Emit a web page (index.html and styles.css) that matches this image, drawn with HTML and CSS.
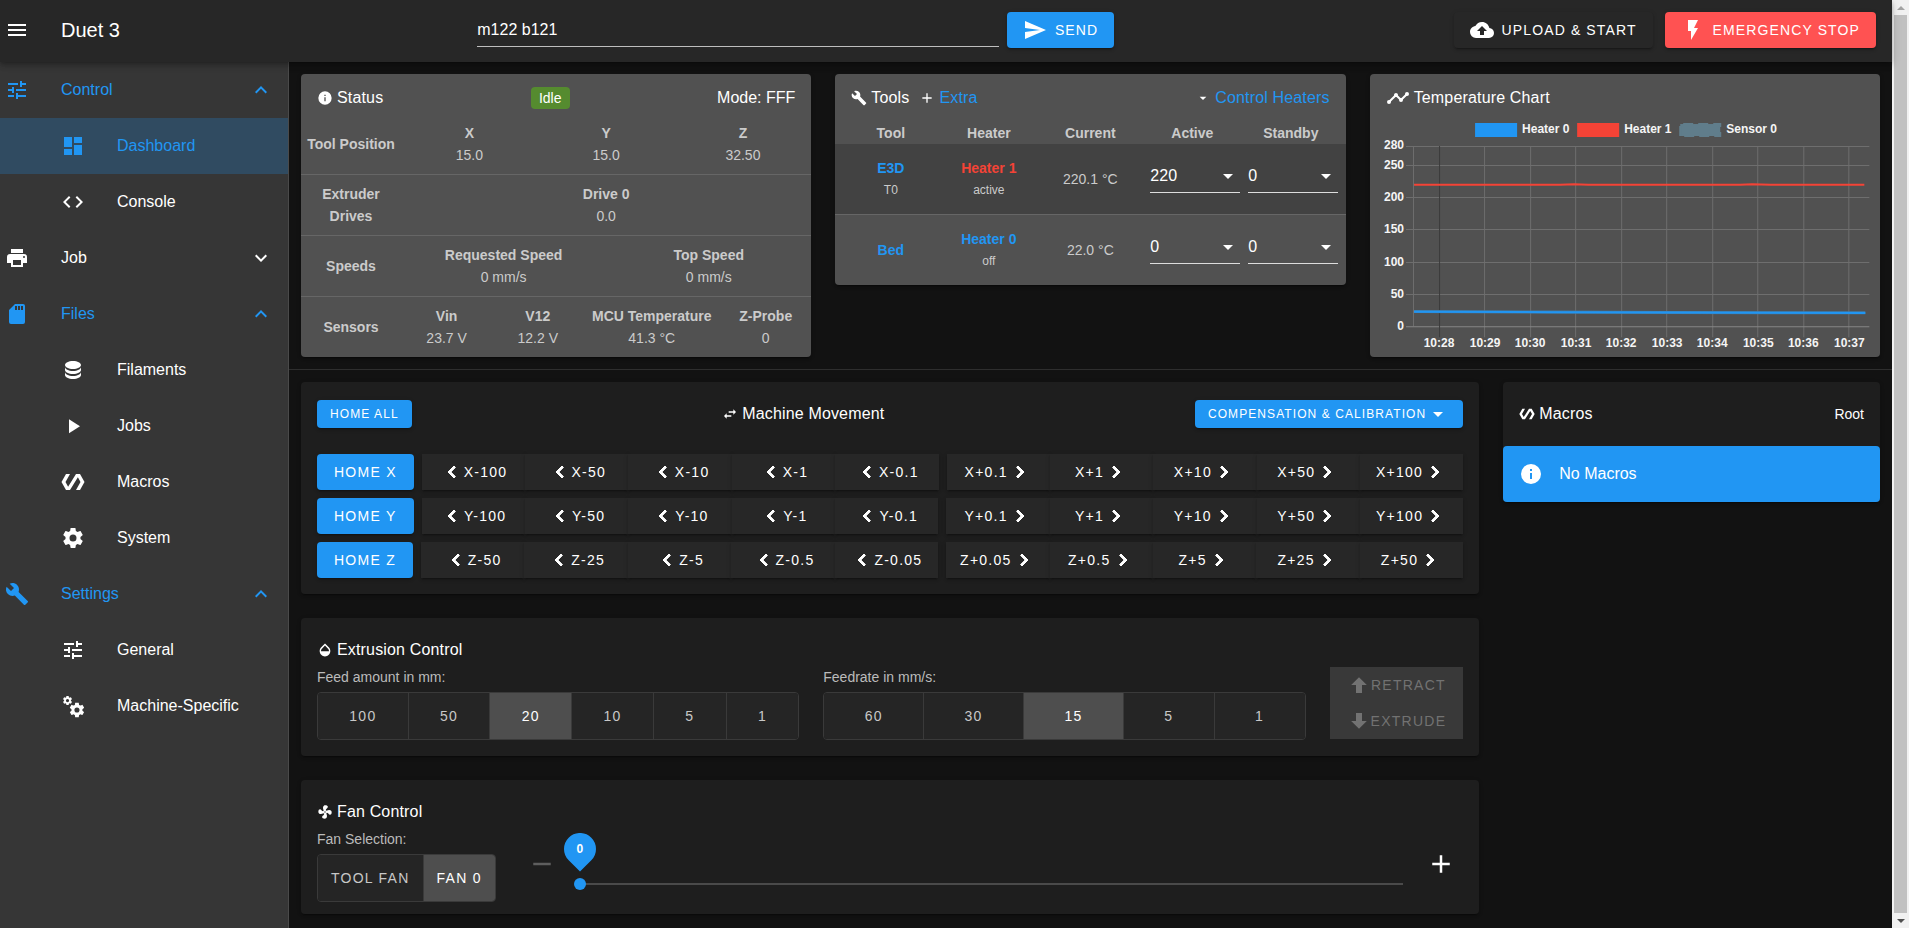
FILE: index.html
```html
<!DOCTYPE html>
<html lang="en">
<head>
<meta charset="utf-8">
<title>Duet 3</title>
<link rel="stylesheet" href="styles.css">
</head>
<body>
<svg class="sprite" aria-hidden="true">
  <symbol id="i-menu" viewBox="0 0 24 24"><path d="M3,6H21V8H3V6M3,11H21V13H3V11M3,16H21V18H3V16Z"/></symbol>
  <symbol id="i-tune" viewBox="0 0 24 24"><path d="M3,17V19H9V17H3M3,5V7H13V5H3M13,21V19H21V17H13V15H11V21H13M7,9V11H3V13H7V15H9V9H7M21,13V11H11V13H21M15,9H17V7H21V5H17V3H15V9Z"/></symbol>
  <symbol id="i-dashboard" viewBox="0 0 24 24"><path d="M13,3V9H21V3M13,21H21V11H13M3,21H11V15H3M3,13H11V3H3V13Z"/></symbol>
  <symbol id="i-code" viewBox="0 0 24 24"><path d="M14.6,16.6L19.2,12L14.6,7.4L16,6L22,12L16,18L14.6,16.6M9.4,16.6L4.8,12L9.4,7.4L8,6L2,12L8,18L9.4,16.6Z"/></symbol>
  <symbol id="i-printer" viewBox="0 0 24 24"><path d="M18,3H6V7H18M19,12A1,1 0 0,1 18,11A1,1 0 0,1 19,10A1,1 0 0,1 20,11A1,1 0 0,1 19,12M16,19H8V14H16M19,8H5A3,3 0 0,0 2,11V17H6V21H18V17H22V11A3,3 0 0,0 19,8Z"/></symbol>
  <symbol id="i-sd" viewBox="0 0 24 24"><path d="M18,8H16V4H18M15,8H13V4H15M12,8H10V4H12M18,2H10L4,8V20A2,2 0 0,0 6,22H18A2,2 0 0,0 20,20V4A2,2 0 0,0 18,2Z"/></symbol>
  <symbol id="i-database" viewBox="0 0 24 24"><path d="M12,3C7.58,3 4,4.79 4,7C4,9.21 7.58,11 12,11C16.42,11 20,9.21 20,7C20,4.79 16.42,3 12,3M4,9V12C4,14.21 7.58,16 12,16C16.42,16 20,14.21 20,12V9C20,11.21 16.42,13 12,13C7.58,13 4,11.21 4,9M4,14V17C4,19.21 7.58,21 12,21C16.42,21 20,19.21 20,17V14C20,16.21 16.42,18 12,18C7.58,18 4,16.21 4,14Z"/></symbol>
  <symbol id="i-play" viewBox="0 0 24 24"><path d="M8,5.14V19.14L19,12.14L8,5.14Z"/></symbol>
  <symbol id="i-polymer" viewBox="0 0 24 24"><path d="M19,4H15L7.1,16.63L4.5,12L9,4H5L0.5,12L5,20H9L16.89,7.37L19.5,12L15,20H19L23.5,12L19,4Z"/></symbol>
  <symbol id="i-cog" viewBox="0 0 24 24"><path id="cog-shape" d="M12,15.5A3.5,3.5 0 0,1 8.5,12A3.5,3.5 0 0,1 12,8.5A3.5,3.5 0 0,1 15.5,12A3.5,3.5 0 0,1 12,15.5M19.43,12.97C19.47,12.65 19.5,12.33 19.5,12C19.5,11.67 19.47,11.34 19.43,11L21.54,9.37C21.73,9.22 21.78,8.95 21.66,8.73L19.66,5.27C19.54,5.05 19.27,4.96 19.05,5.05L16.56,6.05C16.04,5.66 15.5,5.32 14.87,5.07L14.5,2.42C14.46,2.18 14.25,2 14,2H10C9.75,2 9.54,2.18 9.5,2.42L9.13,5.07C8.5,5.32 7.96,5.66 7.44,6.05L4.95,5.05C4.73,4.96 4.46,5.05 4.34,5.27L2.34,8.73C2.21,8.95 2.27,9.22 2.46,9.37L4.57,11C4.53,11.34 4.5,11.67 4.5,12C4.5,12.33 4.53,12.65 4.57,12.97L2.46,14.63C2.27,14.78 2.21,15.05 2.34,15.27L4.34,18.73C4.46,18.95 4.73,19.03 4.95,18.95L7.44,17.94C7.96,18.34 8.5,18.68 9.13,18.93L9.5,21.58C9.54,21.82 9.75,22 10,22H14C14.25,22 14.46,21.82 14.5,21.58L14.87,18.93C15.5,18.67 16.04,18.34 16.56,17.94L19.05,18.95C19.27,19.03 19.54,18.95 19.66,18.73L21.66,15.27C21.78,15.05 21.73,14.78 21.54,14.63L19.43,12.97Z"/></symbol>
  <symbol id="i-cogs" viewBox="0 0 24 24"><use href="#cog-shape" transform="translate(1 1) scale(.46)"/><use href="#cog-shape" transform="translate(7.2 7.2) scale(.73)"/></symbol>
  <symbol id="i-wrench" viewBox="0 0 24 24"><path d="M22.7,19L13.6,9.9C14.5,7.6 14,4.9 12.1,3C10.1,1 7.1,0.6 4.7,1.7L9,6L6,9L1.6,4.7C0.4,7.1 0.9,10.1 2.9,12.1C4.8,14 7.5,14.5 9.8,13.6L18.9,22.7C19.3,23.1 19.9,23.1 20.3,22.7L22.6,20.4C23.1,20 23.1,19.3 22.7,19Z"/></symbol>
  <symbol id="i-cloud" viewBox="0 0 24 24"><path d="M14,13V17H10V13H7L12,8L17,13M19.35,10.03C18.67,6.59 15.64,4 12,4C9.11,4 6.6,5.64 5.35,8.03C2.34,8.36 0,10.9 0,14A6,6 0 0,0 6,20H19A5,5 0 0,0 24,15C24,12.36 21.95,10.22 19.35,10.03Z"/></symbol>
  <symbol id="i-flash" viewBox="0 0 24 24"><path d="M7,2V13H10V22L17,10H13L17,2H7Z"/></symbol>
  <symbol id="i-send" viewBox="0 0 24 24"><path d="M2,21L23,12L2,3V10L17,12L2,14V21Z"/></symbol>
  <symbol id="i-info" viewBox="0 0 24 24"><path d="M13,9H11V7H13M13,17H11V11H13M12,2A10,10 0 0,0 2,12A10,10 0 0,0 12,22A10,10 0 0,0 22,12A10,10 0 0,0 12,2Z"/></symbol>
  <symbol id="i-plus" viewBox="0 0 24 24"><path d="M19,13H13V19H11V13H5V11H11V5H13V11H19V13Z"/></symbol>
  <symbol id="i-minus" viewBox="0 0 24 24"><path d="M19,13H5V11H19V13Z"/></symbol>
  <symbol id="i-down" viewBox="0 0 24 24"><path d="M7,10L12,15L17,10H7Z"/></symbol>
  <symbol id="i-swap" viewBox="0 0 24 24"><path d="M21,9L17,5V8H10V10H17V13M7,11L3,15L7,19V16H14V14H7V11Z"/></symbol>
  <symbol id="i-drop" viewBox="0 0 24 24"><path d="M17.66,8L12,2.35L6.34,8C4.78,9.56 4,11.64 4,13.64C4,15.64 4.78,17.75 6.34,19.31C7.9,20.87 9.95,21.66 12,21.66C14.05,21.66 16.1,20.87 17.66,19.31C19.22,17.75 20,15.64 20,13.64C20,11.64 19.22,9.56 17.66,8M6,14C6,12 6.62,10.73 7.76,9.6L12,5.27L16.24,9.65C17.38,10.77 18,12 18,14H6Z"/></symbol>
  <symbol id="i-fan" viewBox="0 0 24 24"><path d="M12,11A1,1 0 0,0 11,12A1,1 0 0,0 12,13A1,1 0 0,0 13,12A1,1 0 0,0 12,11M12.5,2C17,2 17.11,5.57 14.75,6.75C13.76,7.24 13.32,8.29 13.13,9.22C13.61,9.42 14.03,9.73 14.35,10.13C18.05,8.13 22.03,8.92 22.03,12.5C22.03,17 18.46,17.1 17.28,14.73C16.78,13.74 15.72,13.3 14.79,13.11C14.59,13.59 14.28,14 13.88,14.34C15.87,18.03 15.08,22 11.5,22C7,22 6.91,18.42 9.27,17.24C10.25,16.75 10.69,15.71 10.89,14.79C10.4,14.59 9.97,14.27 9.65,13.87C5.96,15.85 2,15.07 2,11.5C2,7 5.56,6.89 6.74,9.26C7.24,10.25 8.29,10.68 9.22,10.87C9.41,10.39 9.73,9.97 10.14,9.65C8.15,5.96 8.94,2 12.5,2Z"/></symbol>
  <symbol id="i-chart" viewBox="0 0 24 24"><path d="M3,14L3.5,14.07L8.07,9.5C7.89,8.85 8.06,8.11 8.59,7.59C9.37,6.8 10.63,6.8 11.41,7.59C11.94,8.11 12.11,8.85 11.93,9.5L14.5,12.07L15,12C15.18,12 15.35,12 15.5,12.07L19.07,8.5C19,8.35 19,8.18 19,8A2,2 0 0,1 21,6A2,2 0 0,1 23,8A2,2 0 0,1 21,10C20.82,10 20.65,10 20.5,9.93L16.93,13.5C17,13.65 17,13.82 17,14A2,2 0 0,1 15,16A2,2 0 0,1 13,14L13.07,13.5L10.5,10.93C10.18,11 9.82,11 9.5,10.93L4.93,15.5L5,16A2,2 0 0,1 3,18A2,2 0 0,1 1,16A2,2 0 0,1 3,14Z"/></symbol>
  <symbol id="i-chev-up" viewBox="0 0 24 24"><path d="M7.41,15.41L12,10.83L16.59,15.41L18,14L12,8L6,14L7.41,15.41Z"/></symbol>
  <symbol id="i-chev-down" viewBox="0 0 24 24"><path d="M7.41,8.58L12,13.17L16.59,8.58L18,10L12,16L6,10L7.41,8.58Z"/></symbol>
  <symbol id="i-left" viewBox="0 0 24 24"><path d="M15.41,16.58L10.83,12L15.41,7.41L14,6L8,12L14,18L15.41,16.58Z"/></symbol>
  <symbol id="i-right" viewBox="0 0 24 24"><path d="M8.59,16.58L13.17,12L8.59,7.41L10,6L16,12L10,18L8.59,16.58Z"/></symbol>
  <symbol id="i-arrow-up" viewBox="0 0 24 24"><path d="M15,20H9V12H4.16L12,4.16L19.84,12H15V20Z"/></symbol>
  <symbol id="i-arrow-down" viewBox="0 0 24 24"><path d="M9,4H15V12H19.84L12,19.84L4.16,12H9V4Z"/></symbol>
</svg>

<div class="window">
<div class="app">
  <header class="appbar">
    <button class="icon-btn" type="button" aria-label="Toggle menu"><svg class="icon"><use href="#i-menu"/></svg></button>
    <h1 class="brand">Duet 3</h1>
    <form class="code-form">
      <input class="code-input" type="text" value="m122 b121" aria-label="Send code">
      <button class="btn primary" type="button"><svg class="icon"><use href="#i-send"/></svg>SEND</button>
    </form>
    <div class="actions">
      <button class="btn dark" type="button"><svg class="icon"><use href="#i-cloud"/></svg>UPLOAD &amp; START</button>
      <button class="btn danger" type="button"><svg class="icon"><use href="#i-flash"/></svg>EMERGENCY STOP</button>
    </div>
  </header>

  <div class="body">
    <nav class="sidebar">
      <button class="nav-group open" type="button"><svg class="icon"><use href="#i-tune"/></svg><span>Control</span><svg class="icon"><use href="#i-chev-up"/></svg></button>
      <a class="nav-item current" href="#"><svg class="icon"><use href="#i-dashboard"/></svg>Dashboard</a>
      <a class="nav-item" href="#"><svg class="icon"><use href="#i-code"/></svg>Console</a>
      <button class="nav-group" type="button"><svg class="icon"><use href="#i-printer"/></svg><span>Job</span><svg class="icon"><use href="#i-chev-down"/></svg></button>
      <button class="nav-group open" type="button"><svg class="icon"><use href="#i-sd"/></svg><span>Files</span><svg class="icon"><use href="#i-chev-up"/></svg></button>
      <a class="nav-item" href="#"><svg class="icon"><use href="#i-database"/></svg>Filaments</a>
      <a class="nav-item" href="#"><svg class="icon"><use href="#i-play"/></svg>Jobs</a>
      <a class="nav-item" href="#"><svg class="icon"><use href="#i-polymer"/></svg>Macros</a>
      <a class="nav-item" href="#"><svg class="icon"><use href="#i-cog"/></svg>System</a>
      <button class="nav-group open" type="button"><svg class="icon"><use href="#i-wrench"/></svg><span>Settings</span><svg class="icon"><use href="#i-chev-up"/></svg></button>
      <a class="nav-item" href="#"><svg class="icon"><use href="#i-tune"/></svg>General</a>
      <a class="nav-item" href="#"><svg class="icon"><use href="#i-cogs"/></svg>Machine-Specific</a>
    </nav>

    <main class="content">
      <div class="top-row">
        <section class="card light">
          <div class="card-title spread">
            <h2 class="title"><svg class="icon small"><use href="#i-info"/></svg>Status</h2>
            <span class="chip">Idle</span>
            <span>Mode: FFF</span>
          </div>
          <div class="status-row">
            <strong>Tool Position</strong>
            <div class="values"><div><strong>X</strong><span>15.0</span></div><div><strong>Y</strong><span>15.0</span></div><div><strong>Z</strong><span>32.50</span></div></div>
          </div>
          <div class="status-row">
            <strong>Extruder Drives</strong>
            <div class="values"><div><strong>Drive 0</strong><span>0.0</span></div></div>
          </div>
          <div class="status-row">
            <strong>Speeds</strong>
            <div class="values"><div><strong>Requested Speed</strong><span>0 mm/s</span></div><div><strong>Top Speed</strong><span>0 mm/s</span></div></div>
          </div>
          <div class="status-row">
            <strong>Sensors</strong>
            <div class="values sensors"><div><strong>Vin</strong><span>23.7 V</span></div><div><strong>V12</strong><span>12.2 V</span></div><div><strong>MCU Temperature</strong><span>41.3 °C</span></div><div><strong>Z-Probe</strong><span>0</span></div></div>
          </div>
        </section>

        <section class="card light">
          <div class="card-title spread">
            <div class="title-group">
              <h2 class="title"><svg class="icon small"><use href="#i-wrench"/></svg>Tools</h2>
              <a class="title link" href="#"><svg class="icon small"><use href="#i-plus"/></svg>Extra</a>
            </div>
            <a class="title link" href="#"><svg class="icon small"><use href="#i-down"/></svg>Control Heaters</a>
          </div>
          <table class="tools">
            <colgroup><col class="c-tool"><col class="c-heater"><col class="c-current"><col class="c-active"><col class="c-standby"></colgroup>
            <thead><tr><th>Tool</th><th>Heater</th><th>Current</th><th>Active</th><th>Standby</th></tr></thead>
            <tbody>
              <tr class="selected">
                <td><a href="#">E3D</a><small>T0</small></td>
                <td><a class="hot" href="#">Heater 1</a><small>active</small></td>
                <td>220.1 °C</td>
                <td><div class="combo"><select aria-label="E3D active temperature"><option>220</option></select><svg class="icon"><use href="#i-down"/></svg></div></td>
                <td><div class="combo"><select aria-label="E3D standby temperature"><option>0</option></select><svg class="icon"><use href="#i-down"/></svg></div></td>
              </tr>
              <tr>
                <td><a href="#">Bed</a></td>
                <td><a href="#">Heater 0</a><small>off</small></td>
                <td>22.0 °C</td>
                <td><div class="combo"><select aria-label="Bed active temperature"><option>0</option></select><svg class="icon"><use href="#i-down"/></svg></div></td>
                <td><div class="combo"><select aria-label="Bed standby temperature"><option>0</option></select><svg class="icon"><use href="#i-down"/></svg></div></td>
              </tr>
            </tbody>
          </table>
        </section>

        <section class="card light">
          <div class="card-title">
            <h2 class="title"><svg class="icon"><use href="#i-chart"/></svg>Temperature Chart</h2>
          </div>
          <svg class="chart" viewBox="0 0 510 243" role="img" aria-label="Temperature chart">
            <g class="legend">
              <rect class="fill-blue" x="105" y="9" width="42" height="14"/><text x="152" y="19">Heater 0</text>
              <rect class="fill-red" x="207" y="9" width="42" height="14"/><text x="254" y="19">Heater 1</text>
              <rect class="fill-grey" x="310" y="10" width="40" height="12"/><path class="dash" d="M310,22V10H350V22Z"/><text x="356" y="19">Sensor 0</text>
            </g>
            <path class="grid" d="M36,32.5H499M36,51.5H499M36,83.5H499M36,115.5H499M36,148.5H499M36,180.5H499M43.5,32V212M114.5,32V223M160.5,32V223M205.5,32V223M251.5,32V223M296.5,32V223M342.5,32V223M387.5,32V223M433.5,32V223M478.5,32V223"/>
            <path class="axis" d="M36,212.5H499"/>
            <path class="day" d="M69.5,32V223"/>
            <g class="y-labels">
              <text x="34" y="35">280</text><text x="34" y="55">250</text><text x="34" y="87">200</text><text x="34" y="119">150</text><text x="34" y="152">100</text><text x="34" y="184">50</text><text x="34" y="216">0</text>
            </g>
            <g class="x-labels">
              <text x="69" y="233">10:28</text><text x="115" y="233">10:29</text><text x="160" y="233">10:30</text><text x="206" y="233">10:31</text><text x="251" y="233">10:32</text><text x="297" y="233">10:33</text><text x="342" y="233">10:34</text><text x="388" y="233">10:35</text><text x="433" y="233">10:36</text><text x="479" y="233">10:37</text>
            </g>
            <path class="line red" d="M44,70.6H190L204,70.3L218,70.7H370L382,70.3L400,70.7H494"/>
            <path class="line sensor" d="M44,197.3L180,197.9L300,198.3L495,198.7"/>
            <path class="line blue" d="M44,197.5L180,198L300,198.4L495,198.8"/>
          </svg>
        </section>
      </div>

      <div class="bottom-row">
        <div class="main-col">
          <section class="card">
            <div class="move-title">
              <button class="btn primary sm" type="button">HOME ALL</button>
              <h2 class="title"><svg class="icon small"><use href="#i-swap"/></svg>Machine Movement</h2>
              <button class="btn primary sm" type="button">COMPENSATION &amp; CALIBRATION<svg class="icon"><use href="#i-down"/></svg></button>
            </div>
            <div class="moves">
              <div class="move-row">
                <button class="btn primary" type="button">HOME X</button>
                <div class="jog"><button type="button"><svg class="icon"><use href="#i-left"/></svg>X-100</button><button type="button"><svg class="icon"><use href="#i-left"/></svg>X-50</button><button type="button"><svg class="icon"><use href="#i-left"/></svg>X-10</button><button type="button"><svg class="icon"><use href="#i-left"/></svg>X-1</button><button type="button"><svg class="icon"><use href="#i-left"/></svg>X-0.1</button></div>
                <div class="jog"><button type="button">X+0.1<svg class="icon"><use href="#i-right"/></svg></button><button type="button">X+1<svg class="icon"><use href="#i-right"/></svg></button><button type="button">X+10<svg class="icon"><use href="#i-right"/></svg></button><button type="button">X+50<svg class="icon"><use href="#i-right"/></svg></button><button type="button">X+100<svg class="icon"><use href="#i-right"/></svg></button></div>
              </div>
              <div class="move-row">
                <button class="btn primary" type="button">HOME Y</button>
                <div class="jog"><button type="button"><svg class="icon"><use href="#i-left"/></svg>Y-100</button><button type="button"><svg class="icon"><use href="#i-left"/></svg>Y-50</button><button type="button"><svg class="icon"><use href="#i-left"/></svg>Y-10</button><button type="button"><svg class="icon"><use href="#i-left"/></svg>Y-1</button><button type="button"><svg class="icon"><use href="#i-left"/></svg>Y-0.1</button></div>
                <div class="jog"><button type="button">Y+0.1<svg class="icon"><use href="#i-right"/></svg></button><button type="button">Y+1<svg class="icon"><use href="#i-right"/></svg></button><button type="button">Y+10<svg class="icon"><use href="#i-right"/></svg></button><button type="button">Y+50<svg class="icon"><use href="#i-right"/></svg></button><button type="button">Y+100<svg class="icon"><use href="#i-right"/></svg></button></div>
              </div>
              <div class="move-row">
                <button class="btn primary" type="button">HOME Z</button>
                <div class="jog"><button type="button"><svg class="icon"><use href="#i-left"/></svg>Z-50</button><button type="button"><svg class="icon"><use href="#i-left"/></svg>Z-25</button><button type="button"><svg class="icon"><use href="#i-left"/></svg>Z-5</button><button type="button"><svg class="icon"><use href="#i-left"/></svg>Z-0.5</button><button type="button"><svg class="icon"><use href="#i-left"/></svg>Z-0.05</button></div>
                <div class="jog"><button type="button">Z+0.05<svg class="icon"><use href="#i-right"/></svg></button><button type="button">Z+0.5<svg class="icon"><use href="#i-right"/></svg></button><button type="button">Z+5<svg class="icon"><use href="#i-right"/></svg></button><button type="button">Z+25<svg class="icon"><use href="#i-right"/></svg></button><button type="button">Z+50<svg class="icon"><use href="#i-right"/></svg></button></div>
              </div>
            </div>
          </section>

          <section class="card padded">
            <h2 class="title"><svg class="icon small"><use href="#i-drop"/></svg>Extrusion Control</h2>
            <div class="extrude">
              <div class="field">
                <p class="label" id="amount-label">Feed amount in mm:</p>
                <div class="toggle" role="group" aria-labelledby="amount-label"><button type="button">100</button><button type="button">50</button><button type="button" aria-pressed="true">20</button><button type="button">10</button><button type="button">5</button><button type="button">1</button></div>
              </div>
              <div class="field">
                <p class="label" id="rate-label">Feedrate in mm/s:</p>
                <div class="toggle" role="group" aria-labelledby="rate-label"><button type="button">60</button><button type="button">30</button><button type="button" aria-pressed="true">15</button><button type="button">5</button><button type="button">1</button></div>
              </div>
              <div class="extrude-actions">
                <button type="button" disabled><svg class="icon"><use href="#i-arrow-up"/></svg>RETRACT</button>
                <button type="button" disabled><svg class="icon"><use href="#i-arrow-down"/></svg>EXTRUDE</button>
              </div>
            </div>
          </section>

          <section class="card padded fan">
            <h2 class="title"><svg class="icon small"><use href="#i-fan"/></svg>Fan Control</h2>
            <div class="fan-row">
              <div>
                <p class="label" id="fan-label">Fan Selection:</p>
                <div class="toggle" role="group" aria-labelledby="fan-label"><button type="button">TOOL FAN</button><button type="button" aria-pressed="true">FAN 0</button></div>
              </div>
              <div class="slider-row">
                <button class="step" type="button" disabled aria-label="Decrease"><svg class="icon large"><use href="#i-minus"/></svg></button>
                <div class="slider">
                  <input type="range" min="0" max="100" value="0" aria-label="Fan speed">
                  <div class="bubble"><svg viewBox="0 0 32 40"><path d="M16,38.6L4.7,27.3A16,16 0 1 1 27.3,27.3Z"/></svg><span>0</span></div>
                </div>
                <button class="step" type="button" aria-label="Increase"><svg class="icon large"><use href="#i-plus"/></svg></button>
              </div>
            </div>
          </section>
        </div>

        <div class="side-col">
          <section class="card">
            <div class="macro-title">
              <h2 class="title"><svg class="icon small"><use href="#i-polymer"/></svg>Macros</h2>
              <span>Root</span>
            </div>
            <div class="alert"><svg class="icon"><use href="#i-info"/></svg>No Macros</div>
          </section>
        </div>
      </div>
    </main>
  </div>
</div>
<div class="scrollbar" aria-hidden="true"><i class="arrow up"></i><i class="thumb"></i><i class="arrow down"></i></div>
</div>
</body>
</html>
```

FILE: styles.css
```css
* { box-sizing: border-box; }

body {
  margin: 0;
  background: #121212;
  color: #fff;
  font: 16px/24px "Liberation Sans", Arial, sans-serif;
}

button, input, select { font: inherit; color: inherit; }
button { border: 0; background: none; padding: 0; cursor: pointer; }
a { color: inherit; text-decoration: none; }
h1, h2, p { margin: 0; font-weight: 400; }

.sprite { display: none; }
.icon { width: 24px; height: 24px; flex: none; fill: currentColor; display: block; }
.icon.small { width: 16px; height: 16px; }
.icon.large { width: 30px; height: 30px; }

.window { display: flex; min-height: 100vh; }
.app { flex: 1; min-width: 0; display: flex; flex-direction: column; }

/* App bar */
.appbar {
  position: relative;
  z-index: 2;
  display: flex;
  align-items: center;
  padding: 12px 16px 14px 5px;
  background: #272727;
  box-shadow: 0 2px 4px -1px rgba(0,0,0,.2), 0 4px 5px rgba(0,0,0,.14), 0 1px 10px rgba(0,0,0,.12);
}
.brand { margin: 0 18px 0 32px; font-size: 20px; }
.code-form { flex: 0 1 637px; display: flex; gap: 8px; margin: 0 auto; }
.code-input {
  flex: 1;
  min-width: 0;
  height: 35px;
  padding: 2px 0 0;
  border: 0;
  border-bottom: 1px solid #bebebe;
  background: none;
  outline: 0;
}
.actions { display: flex; gap: 12px; }

.btn {
  display: inline-flex;
  align-items: center;
  justify-content: center;
  height: 36px;
  padding: 0 16px;
  border-radius: 4px;
  font-size: 14px;
  font-weight: 500;
  letter-spacing: .09em;
  white-space: nowrap;
  box-shadow: 0 3px 1px -2px rgba(0,0,0,.2), 0 2px 2px rgba(0,0,0,.14), 0 1px 5px rgba(0,0,0,.12);
}
.appbar .btn { gap: 8px; letter-spacing: .08em; }
.btn.primary { background: #2196f3; }
.btn.dark { background: #272727; }
.btn.danger { background: #ff5252; }
.btn.sm { height: 28px; padding: 0 13px; font-size: 12px; }

/* Sidebar */
.body { flex: 1; display: flex; }
.sidebar {
  flex: 0 0 289px;
  background: #363636;
  border-right: 1px solid #4a4a4a;
}
.nav-group, .nav-item { display: flex; align-items: center; gap: 32px; height: 56px; }
.nav-group { width: 100%; padding: 0 15px 0 5px; text-align: left; }
.nav-group span { flex: 1; }
.nav-item { padding-left: 61px; }
.nav-group.open, .nav-item.current { color: #2196f3; }
.nav-item.current { background: #304b61; }

/* Content */
.content { flex: 1; min-width: 0; }
.top-row {
  display: grid;
  grid-template-columns: repeat(3, minmax(0, 1fr));
  gap: 24px;
  align-items: start;
  padding: 12px;
  border-bottom: 1px solid #2e2e2e;
}
.bottom-row { display: flex; align-items: flex-start; padding-top: 12px; }
.main-col { width: 75%; padding: 0 12px 12px; display: grid; gap: 24px; }
.side-col { width: 25%; padding: 0 12px; }

.card {
  border-radius: 4px;
  background: #1e1e1e;
  box-shadow: 0 3px 1px -2px rgba(0,0,0,.2), 0 2px 2px rgba(0,0,0,.14), 0 1px 5px rgba(0,0,0,.12);
}
.card.light { background: #515151; overflow: hidden; }
.card.padded { padding: 16px; }
.card-title { display: flex; height: 40px; padding: 8px 16px 0; align-items: center; }
.spread { justify-content: space-between; }
.title { display: flex; align-items: center; gap: 4px; font-size: 16px; line-height: 32px; letter-spacing: .01em; }
.title-group { display: flex; gap: 10px; }
.link { color: #2196f3; }
.link .icon { color: #fff; }
.chip { padding: 0 8px; border-radius: 4px; background: #558b2f; font-size: 14px; line-height: 22px; }

.status-row {
  display: flex;
  align-items: center;
  height: 60px;
  font-size: 14px;
  line-height: 22px;
  text-align: center;
  color: #cbcbcb;
}
.status-row + .status-row { height: 61px; border-top: 1px solid #666; }
.status-row > strong { flex: 0 0 100px; padding: 0 4px; }
.values { flex: 1; display: grid; grid-auto-flow: column; grid-auto-columns: minmax(0, 1fr); }
.values.sensors { grid-template-columns: 2fr 2fr 3fr 2fr; }
.values strong, .values span { display: block; white-space: nowrap; }

.tools {
  width: 100%;
  table-layout: fixed;
  border-collapse: collapse;
  font-size: 14px;
  line-height: 22px;
  text-align: center;
  color: #cbcbcb;
}
.c-tool, .c-standby { width: 105px; }
.c-heater { width: 97px; }
.c-current { width: 106px; }
.c-active { width: 98px; }
.tools th { padding: 8px 0 0; }
.tools td { height: 70px; padding: 0; }
.tools tr > :first-child { padding-left: 6px; }
.tools th:last-child { padding-right: 6px; }
.tools .selected { background: #424242; }
.tools tr + tr td { height: 71px; border-top: 1px solid #666; }
.tools a { display: block; color: #2196f3; font-weight: 700; }
.tools .hot { color: #f44336; }
.tools small { display: block; font-size: 12px; }
.tools td:nth-child(4) { padding: 0 1px 0 7px; }
.tools td:nth-child(5) { padding: 0 8px 0 7px; }
.combo { position: relative; height: 32px; margin-bottom: 4px; border-bottom: 1px solid #ddd; color: #fff; }
.combo select {
  width: 100%;
  height: 30px;
  padding: 0;
  border: 0;
  background: none;
  appearance: none;
  font-size: 16px;
  display: block;
}
.combo .icon { position: absolute; right: 0; top: 3px; pointer-events: none; }

/* Chart */
.chart { display: block; width: 100%; height: auto; }
.chart text { fill: #f5f5f5; font-size: 12px; font-weight: 700; }
.y-labels text { text-anchor: end; }
.x-labels text { text-anchor: middle; }
.fill-blue { fill: #2196f3; }
.fill-red { fill: #f44336; }
.fill-grey { fill: #607d8b; }
.dash { fill: none; stroke: #607d8b; stroke-width: 2; stroke-dasharray: 10 5; }
.grid { fill: none; stroke: #6e6e6e; }
.axis { stroke: #868686; }
.day { stroke: #3c3c3c; }
.line { fill: none; stroke-width: 2; }
.line.red { stroke: #f44336; }
.line.blue { stroke: #2196f3; }
.line.sensor { stroke: #3f7cab; stroke-width: 3; }

/* Movement */
.move-title, .macro-title { display: flex; align-items: center; justify-content: space-between; padding: 16px; }
.moves { display: grid; gap: 8px; padding: 8px 16px 16px; }
.move-row { display: flex; gap: 8px; }
.move-row .btn { padding: 0 17px; }
.jog { flex: 1 1 0; display: flex; }
.jog button {
  flex: 1 1 0;
  display: flex;
  align-items: center;
  justify-content: center;
  height: 36px;
  background: #272727;
  font-size: 14px;
  font-weight: 500;
  letter-spacing: .09em;
  box-shadow: 0 3px 1px -2px rgba(0,0,0,.2), 0 2px 2px rgba(0,0,0,.14), 0 1px 5px rgba(0,0,0,.12);
}
.jog .icon { stroke: currentColor; stroke-width: 1; }

/* Extrusion and fan */
.label { margin-bottom: 4px; font-size: 14px; line-height: 22px; color: #bbb; }
.extrude { display: flex; gap: 24px; align-items: center; }
.field { flex: 1 1 0; }
.toggle { display: flex; border: 1px solid #3a3a3a; border-radius: 4px; overflow: hidden; }
.toggle button {
  flex: 1 1 auto;
  height: 46px;
  padding: 0 12px;
  background: #252525;
  color: #c8c8c8;
  font-size: 14px;
  font-weight: 500;
  letter-spacing: .09em;
}
.toggle button + button { border-left: 1px solid #3a3a3a; }
.toggle [aria-pressed="true"] { background: #4e4e4e; color: #fff; }
.extrude-actions { display: flex; flex-direction: column; }
.extrude-actions button {
  display: flex;
  align-items: center;
  justify-content: center;
  height: 36px;
  padding: 0 17px;
  background: #393939;
  color: #727272;
  font-size: 14px;
  letter-spacing: .09em;
}

.card.fan { padding-bottom: 12px; }
.fan .toggle button { padding: 0 13px; }
.fan-row { display: flex; gap: 24px; }
.slider-row { flex: 1; display: flex; align-items: center; gap: 10px; }
.step { width: 44px; display: flex; justify-content: center; padding-bottom: 3px; }
.step:disabled { color: #5e5e5e; }
.slider { position: relative; flex: 1; padding-top: 38px; }
.slider input { display: block; width: 100%; height: 16px; margin: 0; appearance: none; background: none; }
.slider input::-webkit-slider-runnable-track {
  height: 12px;
  background: linear-gradient(#4a4a4a, #4a4a4a) center / calc(100% - 12px) 2px no-repeat;
}
.slider input::-webkit-slider-thumb { appearance: none; width: 12px; height: 12px; border-radius: 50%; background: #2196f3; }
.bubble { position: absolute; left: -10px; top: -5px; width: 32px; height: 40px; }
.bubble svg { display: block; width: 32px; height: 40px; fill: #2196f3; }
.bubble span { position: absolute; inset: 0 0 auto; text-align: center; font-size: 12px; font-weight: 700; line-height: 32px; }

.macro-title span { font-size: 14px; }
.alert { display: flex; align-items: center; gap: 16px; height: 56px; padding: 0 16px; border-radius: 4px; background: #2196f3; }

/* Scrollbar */
.scrollbar { flex: 0 0 17px; display: flex; flex-direction: column; align-items: center; background: #f1f1f1; }
.thumb { flex: 1; width: 13px; background: #c1c1c1; }
.arrow { height: 15px; display: flex; align-items: center; }
.arrow::before { content: ""; border: 4px solid transparent; }
.arrow.up::before { border-top: 0; border-bottom-color: #a3a3a3; }
.arrow.down::before { border-bottom: 0; border-top-color: #505050; }
```
